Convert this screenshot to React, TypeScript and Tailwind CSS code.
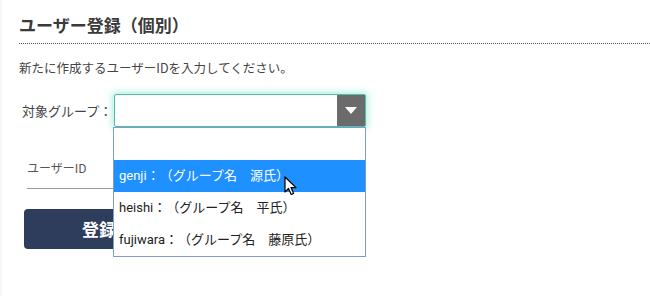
import React from 'react';

const jp = { fontFamily: '"Noto Sans CJK JP", "Noto Sans", sans-serif' };
const opt = { fontFamily: 'Roboto, "Noto Sans CJK JP", sans-serif' };

function Cursor() {
  return (
    <svg className="absolute left-[284px] top-[176px] z-20" width="14" height="20" viewBox="0 0 14 20">
      <path d="M1 1 L1 16 L4.5 12.5 L7.2 18.5 L9.6 17.4 L7 11.6 L12 11.6 Z" fill="#ffffff" stroke="#000000" strokeWidth="1.2" strokeLinejoin="round" />
    </svg>
  );
}

export default function App() {
  const options = [
    { id: 'genji', name: '源氏', active: true },
    { id: 'heishi', name: '平氏', active: false },
    { id: 'fujiwara', name: '藤原氏', active: false },
  ];

  return (
    <div className="relative h-[296px] w-[650px] overflow-hidden bg-white [text-spacing-trim:space-all]" style={jp}>
      <div className="absolute left-0 top-0 h-full w-[2px] bg-[#f7f7f7]" />
      <div className="pl-[19px] pt-[13px]">
        <h1 className="text-[17px] font-bold leading-[24px] text-[#3a3a3a]">ユーザー登録（個別）</h1>
        <div className="mt-[6px] border-b border-dotted border-[#555]" />
        <p className="mt-[15px] text-[12.5px] leading-[18px] text-[#444]">新たに作成するユーザーIDを入力してください。</p>

        <div className="mt-[17px] flex items-center">
          <span className="ml-[3px] w-[92px] text-[13px] text-[#444]">対象グループ：</span>
          <div className="relative">
            <div className="flex h-[33px] w-[252px] rounded-[2px] border border-[#4fbfa8] bg-white shadow-[0_0_6px_2px_rgba(110,230,200,0.55)]">
              <div className="flex-1" />
              <div className="flex w-[28px] items-center justify-center bg-[#6b6b6b]">
                <svg width="12" height="7" viewBox="0 0 12 7">
                  <path d="M0 0 L12 0 L6 7 Z" fill="#ffffff" />
                </svg>
              </div>
            </div>
            <div className="absolute left-[-1px] top-[33px] z-10 w-[253px] border border-[#7e9bd2] bg-white" style={opt}>
              <div className="h-[32px]" />
              {options.map((o) => (
                <div
                  key={o.id}
                  className={`flex h-[32px] items-center px-[5px] text-[13px] ${o.active ? 'bg-[#1e90ff] text-white' : 'text-[#222]'}`}
                >
                  {o.id}：（グループ名　{o.name}）
                </div>
              ))}
            </div>
          </div>
        </div>

        <div className="mt-[27px] ml-[8px] w-[100px] border-b border-[#999] pb-[10px]">
          <span className="text-[12px] text-[#555]">ユーザーID</span>
        </div>

        <button className="mt-[20px] ml-[5px] flex h-[40px] w-[150px] items-center justify-center rounded-[4px] bg-[#2d3d5b] text-[17px] font-bold text-white">
          登録
        </button>
      </div>
      <Cursor />
    </div>
  );
}
